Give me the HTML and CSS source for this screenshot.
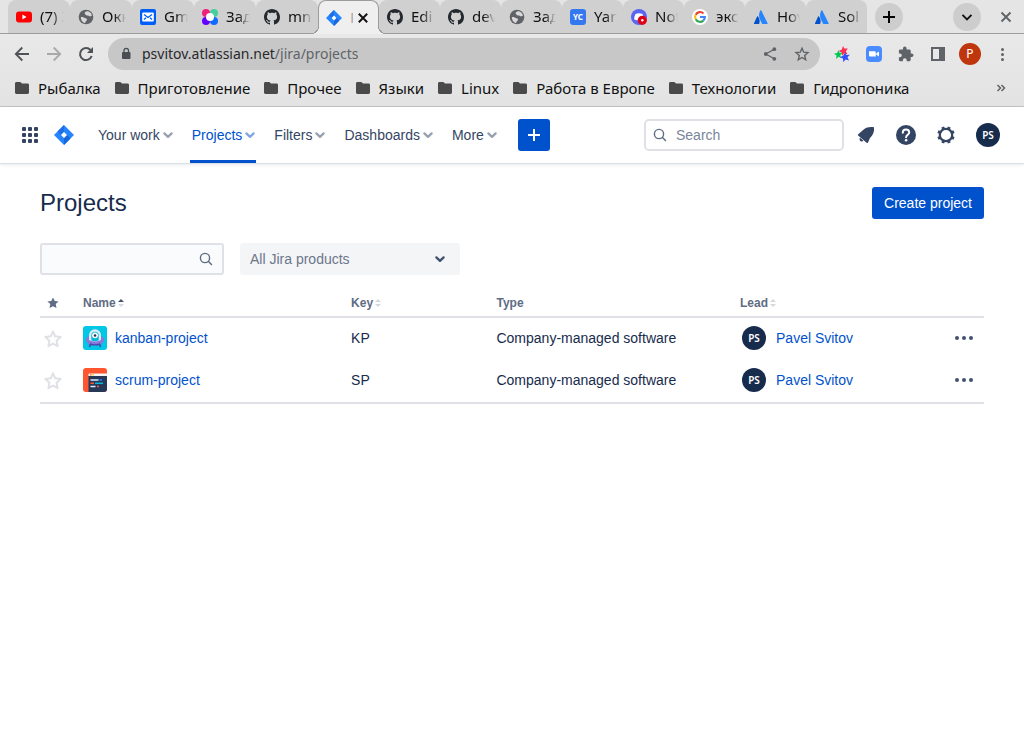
FILE: index.html
```html
<!DOCTYPE html>
<html lang="en">
<head>
<meta charset="utf-8">
<meta name="viewport" content="width=device-width, initial-scale=1">
<title>Projects - Jira</title>
<link rel="stylesheet" href="styles.css">
</head>
<body>
<svg class="sprite" aria-hidden="true">
  <symbol id="globe" viewBox="0 0 16 16"><circle cx="8" cy="8" r="7.300" fill="#5f6368"/><path d="M2.800 8.200c1.800-.8 3 .2 4.200 1 1.200 0 2 .3 2 1.300s-1.500 1.500-2 3.700a6.500 6.500 0 0 1-4.200-6zM7 3.200C8 2.500 9 2 10 2.300c2 .7 3.500 2.200 4 4.200-1 .5-2 1.500-3 .5S8.500 7 8 6 6 5 7 3.200z" fill="#d8d8d8"/></symbol>
  <symbol id="github" viewBox="0 0 16 16"><path fill="#24292f" fill-rule="evenodd" d="M8 0C3.580 0 0 3.580 0 8c0 3.540 2.290 6.530 5.470 7.590.4.070.55-.17.55-.38 0-.19-.01-.82-.01-1.490-2.010.37-2.530-.49-2.690-.94-.09-.23-.48-.94-.82-1.130-.28-.15-.68-.52-.01-.53.63-.01 1.080.58 1.230.82.72 1.210 1.870.87 2.330.66.07-.52.28-.87.51-1.070-1.780-.2-3.640-.89-3.640-3.950 0-.87.31-1.590.82-2.150-.08-.2-.36-1.020.08-2.120 0 0 .67-.21 2.200.82.64-.18 1.320-.27 2-.27s1.360.09 2 .27c1.530-1.040 2.200-.82 2.200-.82.44 1.100.16 1.920.08 2.120.51.56.82 1.270.82 2.150 0 3.070-1.870 3.750-3.650 3.950.29.25.54.73.54 1.480 0 1.070-.01 1.930-.01 2.200 0 .21.15.46.55.38A8.010 8.010 0 0 0 16 8c0-4.420-3.580-8-8-8z"/></symbol>
  <symbol id="jira" viewBox="0 0 20 20"><path d="M10 0l10 10-10 10L0 10z" fill="#2684ff"/><path d="M10 0v7L7 10 3.500 6.500z" fill="#1d6fe8"/><path d="M10 20v-7l3-3 3.500 3.500z" fill="#1868db"/><path d="M10 7l3 3-3 3-3-3z" fill="#fff"/></symbol>
  <symbol id="atlassian" viewBox="0 0 16 16"><path d="M5 7.500c-.3-.3-.7-.3-.9.100L1 14.300c-.2.400 0 .7.400.7h4.400c.2 0 .3-.1.400-.3.9-2 .5-5.200-1.200-7.200z" fill="#0052cc"/><path d="M7.400 1.600c-1.800 3-1.700 6.300-.5 8.700l2.200 4.400c.1.200.3.300.5.300h4.600c.4 0 .6-.4.400-.7L8.300 1.600c-.2-.4-.7-.4-.9 0z" fill="#2684ff"/></symbol>
  <symbol id="folder" viewBox="0 0 14 12"><path d="M0 1.500C0 .6.600 0 1.400 0h4L7 1.600h5.600c.8 0 1.400.6 1.400 1.400v7.600c0 .8-.6 1.400-1.400 1.400H1.400C.6 12 0 11.400 0 10.600z" fill="#4a4a4a"/></symbol>
  <symbol id="chevron" viewBox="0 0 12 12"><path d="M2.900 4.600L6 7.600l3.100-3" fill="none" stroke="currentColor" stroke-width="2" stroke-linecap="round" stroke-linejoin="round"/></symbol>
  <symbol id="magnifier" viewBox="0 0 14 14"><circle cx="6" cy="6" r="4.600" fill="none" stroke="currentColor" stroke-width="1.400"/><path d="M9.500 9.500l3 3" stroke="currentColor" stroke-width="1.500" stroke-linecap="round"/></symbol>
  <symbol id="sort" viewBox="0 0 6 8"><path class="up" d="M0 3l3-3 3 3z"/><path class="down" d="M0 5l3 3 3-3z"/></symbol>
  <symbol id="star" viewBox="0 0 18 18"><path d="M9 1.400l2.200 4.900 5.400.7-4 3.700 1 5.400L9 13.500l-4.600 2.600 1-5.400L1.400 7l5.400-.7z" fill="none" stroke="#dfe1e6" stroke-width="2" stroke-linejoin="round"/></symbol>
  <symbol id="dots" viewBox="0 0 18 4"><g fill="#42526e"><circle cx="2" cy="2" r="2"/><circle cx="9" cy="2" r="2"/><circle cx="16" cy="2" r="2"/></g></symbol>
</svg>

<header class="browser">
  <div class="tabstrip">
    <div class="tabs">
      <div class="tab"><svg viewBox="0 0 16 16"><rect y="2.500" width="16" height="11" rx="3" fill="red"/><path d="M6.400 5.500v5L10.500 8z" fill="#fff"/></svg><span>(7) З</span></div>
      <div class="tab"><svg><use href="#globe"/></svg><span>Окн</span></div>
      <div class="tab"><svg viewBox="0 0 16 16"><rect width="16" height="16" rx="2" fill="#005ff9"/><rect x="2.200" y="3.500" width="11.600" height="9" rx="1" fill="#fff"/><path d="M4 5.500l4 3 4-3M4 10.500l2-1.800M12 10.500l-2-1.800" stroke="#005ff9" stroke-width="1.300" fill="none"/></svg><span>Gm</span></div>
      <div class="tab"><svg viewBox="0 0 16 16"><circle cx="4" cy="4" r="4" fill="#f0207b"/><circle cx="12" cy="4" r="4" fill="#45cf9e"/><circle cx="4" cy="12" r="4" fill="#6200ff"/><circle cx="12" cy="12" r="4" fill="#0d6cff"/><circle cx="8" cy="8" r="4" fill="#fff"/></svg><span>Зад</span></div>
      <div class="tab"><svg><use href="#github"/></svg><span>mn</span></div>
      <div class="tab active"><svg><use href="#jira"/></svg><span>P</span><button class="close" aria-label="Close tab"><svg viewBox="0 0 10 10"><path d="M1.500 1.500l7 7m0-7l-7 7" stroke="#111" stroke-width="1.600"/></svg></button></div>
      <div class="tab"><svg><use href="#github"/></svg><span>Edi</span></div>
      <div class="tab"><svg><use href="#github"/></svg><span>dev</span></div>
      <div class="tab"><svg><use href="#globe"/></svg><span>Зад</span></div>
      <div class="tab"><svg viewBox="0 0 16 16"><rect width="16" height="16" rx="3" fill="#3478f0"/><text x="8" y="11" class="yc">YC</text></svg><span>Yan</span></div>
      <div class="tab"><svg viewBox="0 0 16 16"><circle cx="8" cy="8" r="8" fill="#5865f2"/><path d="M4.500 5q3.500-1.500 7 0 1.500 3 1.300 5.500-4.800 2-9.600 0Q3 8 4.500 5z" fill="#fff"/><circle cx="11.300" cy="11.300" r="4.600" fill="#e00016"/><circle cx="11.300" cy="11.300" r="1.200" fill="#fff"/></svg><span>Not</span></div>
      <div class="tab"><svg viewBox="0 0 16 16"><circle cx="8" cy="8" r="8" fill="#fff"/><g fill="none" stroke-width="2.100"><path d="M11.500 4.500A4.900 4.900 0 0 0 3.700 5.700" stroke="#ea4335"/><path d="M3.700 5.700a4.900 4.900 0 0 0 0 4.600" stroke="#fbbc05"/><path d="M3.700 10.300a4.900 4.900 0 0 0 7.600 1.300" stroke="#34a853"/><path d="M11.300 11.600A4.900 4.900 0 0 0 12.900 8H8" stroke="#4285f4"/></g></svg><span>экс</span></div>
      <div class="tab"><svg><use href="#atlassian"/></svg><span>Hov</span></div>
      <div class="tab"><svg><use href="#atlassian"/></svg><span>Sol</span></div>
    </div>
    <button class="round" aria-label="New tab"><svg viewBox="0 0 16 16"><path d="M8 2v12M2 8h12" stroke="#000" stroke-width="2"/></svg></button>
    <div class="window">
      <button class="round" aria-label="Search tabs"><svg viewBox="0 0 16 16"><path d="M3.500 5.800L8 10.300l4.500-4.500" stroke="#111" stroke-width="1.900" fill="none"/></svg></button>
      <button class="quit" aria-label="Close window"><svg viewBox="0 0 12 12"><path d="M1.500 1.500l9 9m0-9l-9 9" stroke="#5f6368" stroke-width="1.900"/></svg></button>
    </div>
  </div>

  <div class="toolbar">
    <button aria-label="Back"><svg viewBox="0 0 16 16"><path d="M15 8H2m6.300-6.500L1.800 8l6.500 6.500" fill="none" stroke="#4f5256" stroke-width="1.800"/></svg></button>
    <button aria-label="Forward"><svg viewBox="0 0 16 16"><path d="M1 8h13M7.700 1.500L14.200 8l-6.500 6.500" fill="none" stroke="#a8a9ab" stroke-width="1.800"/></svg></button>
    <button aria-label="Reload"><svg viewBox="0 0 16 16"><path d="M13.700 10A6 6 0 1 1 12.500 4" fill="none" stroke="#4f5256" stroke-width="2"/><path d="M15 1v6H9z" fill="#4f5256"/></svg></button>
    <div class="omnibox">
      <svg class="lock" viewBox="0 0 10 14"><rect x="1" y="5" width="8.500" height="7" rx="1" fill="#4a4d51"/><path d="M3 6V3.600a2.200 2.200 0 0 1 4.500 0V6" fill="none" stroke="#4a4d51" stroke-width="1.300"/></svg>
      <div class="url">psvitov.atlassian.net<span>/jira/projects</span></div>
      <button aria-label="Share"><svg viewBox="0 0 16 16"><path d="M12.300 3.200L3.800 8l8.500 4.800" fill="none" stroke="#5f6368" stroke-width="1.300"/><g fill="#5f6368"><circle cx="12.300" cy="3.200" r="1.900"/><circle cx="3.800" cy="8" r="1.900"/><circle cx="12.300" cy="12.800" r="1.900"/></g></svg></button>
      <button aria-label="Bookmark this page"><svg viewBox="0 0 16 16"><path d="M8 2.200l1.700 4 4.300.4-3.300 2.900 1 4.300L8 11.500l-3.700 2.300 1-4.300L2 6.600l4.300-.4z" fill="none" stroke="#5f6368" stroke-width="1.400"/></svg></button>
    </div>
    <div class="extensions">
      <button aria-label="Stars extension"><svg viewBox="0 0 16 16"><path d="M9 0l1.400 2.600 3.400-.1-1.900 2.700 1.500 3-3.200-.8L8 9.700l-.3-3.300L4.800 5l3-1.400z" fill="#ff2d55"/><path d="M4.500 4l.9 2.800 3.200-.1-2.400 2.300L7.200 12l-2.700-1.300L2 13l.6-3.600L-.2 7.700l3.300-.7z" fill="#00c853"/><path d="M11.300 6.500l1 2.600 3.600-.4-2.500 2.500 1.700 3.400-3.500-1L9.300 16.200l-.3-3.700-3.100-1.200 3.200-1.500z" fill="#304ffe"/></svg></button>
      <button aria-label="Zoom extension"><svg viewBox="0 0 16 16"><rect width="16" height="16" rx="4" fill="#4a8cff"/><path d="M3 5.300h5.500c.8 0 1.300.5 1.300 1.300v4H4.300c-.8 0-1.300-.5-1.300-1.300zM10.300 7.200L13 5.400v5.200l-2.700-1.800z" fill="#fff"/></svg></button>
      <button aria-label="Extensions"><svg viewBox="0 0 16 16"><path d="M13.700 7.500h-1V4.800c0-.8-.6-1.400-1.400-1.400H8.600V2.300a1.800 1.800 0 0 0-3.600 0v1.100H2.300C1.500 3.400.9 4 .9 4.800v2.600h1a1.900 1.900 0 0 1 0 3.800h-1v2.600c0 .8.600 1.400 1.400 1.400h2.600v-1a1.900 1.900 0 0 1 3.800 0v1h2.600c.8 0 1.400-.6 1.400-1.400v-2.700h1a1.800 1.800 0 0 0 0-3.600z" fill="#5f6368"/></svg></button>
      <button aria-label="Side panel"><svg viewBox="0 0 16 16"><path d="M1 1h14v14H1zM3 3v10h6V3z" fill="#5f6368" fill-rule="evenodd"/></svg></button>
      <button class="profile" aria-label="Profile">P</button>
      <button aria-label="Menu"><svg viewBox="0 0 16 16"><g fill="#5f6368"><circle cx="8.500" cy="3.500" r="1.500"/><circle cx="8.500" cy="8.500" r="1.500"/><circle cx="8.500" cy="13.500" r="1.500"/></g></svg></button>
    </div>
  </div>

  <nav class="bookmarks" aria-label="Bookmarks">
    <a href="#"><svg><use href="#folder"/></svg>Рыбалка</a>
    <a href="#"><svg><use href="#folder"/></svg>Приготовление</a>
    <a href="#"><svg><use href="#folder"/></svg>Прочее</a>
    <a href="#"><svg><use href="#folder"/></svg>Языки</a>
    <a href="#"><svg><use href="#folder"/></svg>Linux</a>
    <a href="#"><svg><use href="#folder"/></svg>Работа в Европе</a>
    <a href="#"><svg><use href="#folder"/></svg>Технологии</a>
    <a href="#"><svg><use href="#folder"/></svg>Гидропоника</a>
    <button class="more" aria-label="More bookmarks"><svg viewBox="0 0 10 8"><path d="M1.500 1l3 3-3 3M5.500 1l3 3-3 3" fill="none" stroke="#5f6368" stroke-width="1.500"/></svg></button>
  </nav>
</header>

<nav class="topnav" aria-label="Jira">
  <button class="apps" aria-label="Switch apps"><svg viewBox="0 0 16 16"><g fill="#344563"><rect width="4" height="4" rx="1"/><rect x="6" width="4" height="4" rx="1"/><rect x="12" width="4" height="4" rx="1"/><rect y="6" width="4" height="4" rx="1"/><rect x="6" y="6" width="4" height="4" rx="1"/><rect x="12" y="6" width="4" height="4" rx="1"/><rect y="12" width="4" height="4" rx="1"/><rect x="6" y="12" width="4" height="4" rx="1"/><rect x="12" y="12" width="4" height="4" rx="1"/></g></svg></button>
  <a class="logo" href="#" aria-label="Jira home"><svg><use href="#jira"/></svg></a>
  <div class="menus">
    <button>Your work<svg><use href="#chevron"/></svg></button>
    <button class="current">Projects<svg><use href="#chevron"/></svg></button>
    <button>Filters<svg><use href="#chevron"/></svg></button>
    <button>Dashboards<svg><use href="#chevron"/></svg></button>
    <button>More<svg><use href="#chevron"/></svg></button>
  </div>
  <button class="create" aria-label="Create"><svg viewBox="0 0 12 12"><path d="M6 0v12M0 6h12" stroke="#fff" stroke-width="2"/></svg></button>
  <label class="search"><svg><use href="#magnifier"/></svg><input type="text" placeholder="Search" aria-label="Search"></label>
  <div class="actions">
    <button aria-label="Notifications"><svg viewBox="0 0 20 20"><path d="M18 2.200c-5-.5-8.600.2-11.500 3.400L2 9.500c-.3.400-.3.800.1 1.100l8.800 7.300c.5.300.9.100 1.100-.4l2-4.500c3-3 4.500-6 4-10.800z" fill="#344563"/><path d="M4 12.800l3.400 2.900c-.9.900-2.100 1-3 .2s-1.200-2.100-.4-3.100z" fill="#344563"/></svg></button>
    <button aria-label="Help"><svg viewBox="0 0 20 20"><circle cx="10" cy="10" r="10" fill="#344563"/><path d="M6.800 7.700c0-2 1.300-3.200 3.200-3.200s3.200 1.200 3.200 2.900c0 2.300-3 2.400-3.100 4.900" fill="none" stroke="#fff" stroke-width="2" stroke-linecap="round"/><circle cx="10.100" cy="15.300" r="1.300" fill="#fff"/></svg></button>
    <button aria-label="Settings"><svg viewBox="0 0 20 20"><circle cx="10" cy="10" r="6.200" fill="none" stroke="#344563" stroke-width="2.200"/><path d="M6.700 2l1 2.300M13.300 2l-1 2.300M6.700 18l1-2.300M13.300 18l-1-2.300M2 6.700l2.300 1M2 13.300l2.300-1M18 6.700l-2.300 1M18 13.300l-2.300-1" stroke="#344563" stroke-width="3"/></svg></button>
    <button class="avatar" aria-label="Your profile">PS</button>
  </div>
</nav>

<main>
  <div class="heading">
    <h1>Projects</h1>
    <button class="primary">Create project</button>
  </div>
  <form class="filters">
    <label class="find"><input type="text" aria-label="Search projects"><svg><use href="#magnifier"/></svg></label>
    <label class="product"><select aria-label="Product"><option>All Jira products</option></select><svg><use href="#chevron"/></svg></label>
  </form>
  <table>
    <colgroup><col class="c-star"><col class="c-name"><col class="c-key"><col class="c-type"><col></colgroup>
    <thead>
      <tr>
        <th aria-label="Starred"><svg class="starred" viewBox="0 0 12 12"><path d="M6 .5l1.700 3.600 3.900.4-2.900 2.600.8 3.900L6 9.200 2.500 11l.8-3.900L.4 4.500l3.900-.4z" fill="#5e6c84"/></svg></th>
        <th><span class="sort asc">Name<svg><use href="#sort"/></svg></span></th>
        <th><span class="sort">Key<svg><use href="#sort"/></svg></span></th>
        <th>Type</th>
        <th><span class="sort">Lead<svg><use href="#sort"/></svg></span></th>
      </tr>
    </thead>
    <tbody>
      <tr>
        <td><button class="fav" aria-label="Star kanban-project"><svg><use href="#star"/></svg></button></td>
        <td><a class="project" href="#"><svg viewBox="0 0 24 24"><rect width="24" height="24" rx="3" fill="#00c7e5"/><path d="M7.500 17l-1 4M16.500 17l1 4" stroke="#5243aa" stroke-width="1.600"/><ellipse cx="12" cy="14" rx="9.200" ry="5.300" fill="#8777d9"/><path d="M6 14V9.200a6 6 0 0 1 12 0V14q-6 3-12 0z" fill="#deebff"/><path d="M8.300 14.500V9.500a3.700 3.700 0 0 1 7.400 0v5q-3.700 1.600-7.400 0z" fill="#00b8d9"/><circle cx="12" cy="9.300" r="2.900" fill="#fff"/><circle cx="12" cy="9.500" r="1.300" fill="#253858"/><path d="M7 18q5 1.800 10 0" stroke="#5243aa" stroke-width="1.400" fill="none"/></svg>kanban-project</a></td>
        <td>KP</td>
        <td>Company-managed software</td>
        <td><div class="lead"><span class="avatar">PS</span><a href="#">Pavel Svitov</a><button aria-label="Actions for kanban-project"><svg><use href="#dots"/></svg></button></div></td>
      </tr>
      <tr>
        <td><button class="fav" aria-label="Star scrum-project"><svg><use href="#star"/></svg></button></td>
        <td><a class="project" href="#"><svg viewBox="0 0 24 24"><rect width="24" height="24" rx="3" fill="#ff5630"/><path d="M5.500 8H24v13a3 3 0 0 1-3 3H5.500z" fill="#253858"/><path d="M5.500 8V6.500q0-1 1-1H24V8z" fill="#f4f5f7"/><path d="M7 6.800h1.500" stroke="#ff5630" stroke-width="1.200"/><path d="M9.500 6.800H11" stroke="#ffc400" stroke-width="1.200"/><g stroke-width="1.500"><path d="M7.500 12h8M7.500 18.500h5" stroke="#deebff"/><path d="M16.500 12H19" stroke="#2684ff"/><path d="M7.500 15.300H11M14 18.500h2" stroke="#ff5630"/><path d="M12 15.300h8" stroke="#00b8d9"/></g></svg>scrum-project</a></td>
        <td>SP</td>
        <td>Company-managed software</td>
        <td><div class="lead"><span class="avatar">PS</span><a href="#">Pavel Svitov</a><button aria-label="Actions for scrum-project"><svg><use href="#dots"/></svg></button></div></td>
      </tr>
    </tbody>
  </table>
</main>
</body>
</html>
```

FILE: styles.css
```css
* { box-sizing: border-box; }
body {
  margin: 0;
  background: #fff;
  color: #172b4d;
  font: 14px/20px "Liberation Sans", Arial, sans-serif;
}
button, input, select { font: inherit; color: inherit; }
button {
  display: flex;
  align-items: center;
  justify-content: center;
  flex: none;
  padding: 0;
  border: 0;
  background: none;
}
a { color: #0052cc; text-decoration: none; }
svg { display: block; flex: none; width: 16px; height: 16px; }
.sprite { position: absolute; width: 0; height: 0; }

/* Browser window */
.browser {
  font-family: "Noto Sans", sans-serif;
  color: #111;
  background: linear-gradient(#ebebeb, #e3e3e3);
  border-bottom: 1px solid #c4c4c4;
}
.tabstrip {
  display: flex;
  align-items: center;
  height: 34px;
  padding: 0 12px 0 8px;
  background: #e5e5e5;
  border-bottom: 1px solid #9c9c9c;
}
.tabs { display: flex; flex: 1; min-width: 0; height: 33px; margin-right: 8px; }
.tab {
  position: relative;
  display: flex;
  flex: 1 1 20px;
  align-items: center;
  gap: 8px;
  min-width: 0;
  padding: 0 6px 0 8px;
  font-size: 15px;
  background: #d0d0d0;
  border-radius: 8px 8px 0 0;
}
.tab:nth-child(-n+5) { flex-basis: 21px; }
.tab > span {
  flex: 1;
  min-width: 0;
  padding-bottom: 2px;
  overflow: hidden;
  white-space: nowrap;
  -webkit-mask-image: linear-gradient(to right, #000 50%, transparent);
  mask-image: linear-gradient(to right, #000 50%, transparent);
}
.tab:not(.active, :nth-child(5), :last-child)::after {
  content: "";
  position: absolute;
  top: 8px;
  right: -1px;
  width: 1px;
  height: 19px;
  background: #858585;
}
.tab.active {
  z-index: 1;
  height: 34px;
  background: #efefef;
  border: 1px solid #9c9c9c;
  border-bottom: 0;
  padding: 0 8px 0 7px;
}
.tab.active > span { color: #aaa; -webkit-mask-image: none; mask-image: none; }
.tab.active::before, .tab.active::after {
  content: "";
  position: absolute;
  bottom: 0;
  width: 8px;
  height: 8px;
}
.tab.active::before { right: 100%; background: radial-gradient(circle at 0 0, #d0d0d0 7px, #9c9c9c 7px 8px, #efefef 8px); }
.tab.active::after { left: 100%; background: radial-gradient(circle at 100% 0, #d0d0d0 7px, #9c9c9c 7px 8px, #efefef 8px); }
.tab .close { width: 14px; margin-left: -5px; }
.close svg, .quit svg { width: 12px; height: 12px; }
.yc { font: 700 8px "Noto Sans", sans-serif; fill: #fff; text-anchor: middle; }
.round { width: 28px; height: 28px; border-radius: 50%; background: #cdcdcd; }
.window { display: flex; gap: 19px; margin-left: 50px; }

.toolbar { display: flex; align-items: center; gap: 16px; height: 40px; padding: 0 14px; }
.omnibox {
  display: flex;
  align-items: center;
  flex: 1;
  gap: 16px;
  height: 32px;
  padding: 0 10px 0 13px;
  margin: 0 -2px;
  border-radius: 16px;
  background: #c7c7c7;
}
.omnibox .lock { width: 10px; height: 14px; margin-right: -5px; }
.url { flex: 1; color: #27292c; }
.url span { color: #5f6368; }
.extensions { display: flex; align-items: center; gap: 16px; }
.extensions button { width: 16px; }
.extensions .profile {
  width: 22px;
  height: 22px;
  margin: 0 -3px;
  border-radius: 50%;
  background: #bf360c;
  color: #fff;
  font-size: 12px;
}
.bookmarks { display: flex; align-items: center; gap: 14px; height: 32px; padding: 0 18px 5px 15px; }
.bookmarks a { display: flex; align-items: center; gap: 9px; color: #111; font-size: 15px; white-space: nowrap; }
.bookmarks a svg { width: 14px; height: 12px; }
.more { margin-left: auto; }
.more svg { width: 10px; height: 8px; }

/* Jira navigation */
.topnav {
  display: flex;
  align-items: center;
  height: 57px;
  padding: 0 24px 0 22px;
  border-bottom: 1px solid #dcdee5;
  box-shadow: 0 1px 3px #091e4218;
  color: #344563;
}
.logo { margin: 0 22px 0 16px; }
.logo svg { width: 20px; height: 20px; }
.menus { display: flex; gap: 16px; align-self: stretch; }
.menus button { padding: 0 0 0 2px; border: solid transparent; border-width: 3px 0; }
.menus button.current { color: #0052cc; border-bottom-color: #0052cc; }
.menus svg { width: 14px; height: 14px; opacity: 0.5; margin-left: 1px; margin-right: -1px; }
.create { width: 32px; height: 32px; margin-left: 20px; background: #0052cc; border-radius: 3px; }
.create svg { width: 12px; height: 12px; }
.search {
  display: flex;
  align-items: center;
  gap: 9px;
  width: 200px;
  height: 32px;
  margin-left: auto;
  padding: 0 8px 0 7px;
  border: 2px solid #dfe1e6;
  border-radius: 5px;
}
.search svg, .find svg { width: 14px; height: 14px; color: #5e6c84; }
.search input { width: 100%; min-width: 0; padding: 0; border: 0; outline: 0; background: none; }
.search input::placeholder { color: #7a869a; opacity: 1; }
.actions { display: flex; align-items: center; gap: 20px; margin-left: 12px; }
.actions svg { width: 20px; height: 20px; }
.avatar {
  display: flex;
  align-items: center;
  justify-content: center;
  flex: none;
  width: 24px;
  height: 24px;
  border-radius: 50%;
  background: #172b4d;
  color: #fff;
  font: 600 10px/24px "Noto Sans", sans-serif;
}

/* Projects page */
main { padding: 23px 40px; }
.heading { display: flex; align-items: center; justify-content: space-between; margin-bottom: 24px; }
h1 { margin: 0; font-size: 24px; line-height: 28px; font-weight: 400; }
.primary { height: 32px; padding: 0 12px; border-radius: 3px; background: #0052cc; color: #fff; }
.filters { display: flex; gap: 16px; margin-bottom: 18px; }
.find {
  display: flex;
  align-items: center;
  width: 184px;
  height: 32px;
  padding: 0 9px 0 8px;
  border: 2px solid #dfe1e6;
  border-radius: 3px;
  background: #fafbfc;
}
.find input { flex: 1; min-width: 0; border: 0; outline: 0; padding: 0; background: none; }
.product {
  display: flex;
  align-items: center;
  width: 220px;
  height: 32px;
  padding: 0 13px 0 10px;
  border-radius: 3px;
  background: #f4f5f7;
  color: #42526e;
}
.product select { flex: 1; min-width: 0; padding: 0; border: 0; appearance: none; background: none; color: #6b778c; }
.product svg { width: 14px; height: 14px; }

table { width: 100%; table-layout: fixed; border-collapse: collapse; }
.c-star { width: 43px; }
.c-name { width: 28.4%; }
.c-key { width: 15.4%; }
.c-type { width: 25.8%; }
th { padding: 0 0 3px; text-align: left; font-size: 12px; color: #5e6c84; }
tbody { border: solid #dfe1e6; border-width: 2px 0; }
td { padding: 8px 0 10px; vertical-align: middle; }
.starred { width: 12px; height: 12px; margin-left: 7px; }
.sort { display: inline-flex; align-items: center; gap: 2px; }
.sort svg { width: 6px; height: 8px; }
.up { fill: var(--up, #d5d8df); }
.down { fill: #d5d8df; }
.asc { --up: #42526e; }
.fav svg { width: 18px; height: 18px; }
.fav { margin: 2px 0 0 4px; }
.project { display: flex; align-items: center; gap: 8px; }
.project svg { width: 24px; height: 24px; }
.lead { display: flex; align-items: center; gap: 10px; padding: 0 11px 0 2px; }
.lead button { margin-left: auto; }
.lead button svg { width: 18px; height: 4px; }
```
